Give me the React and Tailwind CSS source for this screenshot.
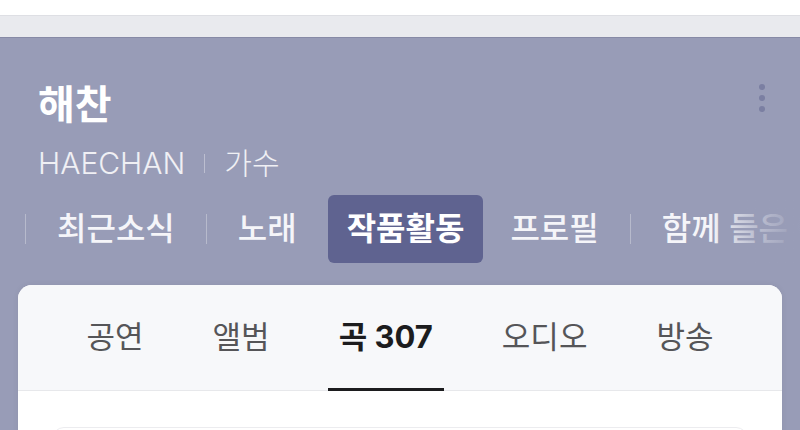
export default function App() {
  const topTabs = [
    { label: '최근소식' },
    { label: '노래' },
    { label: '작품활동', active: true },
    { label: '프로필', pull: true },
    { label: '함께 들은 아티스트' },
  ];

  const cardTabs = ['공연', '앨범', '곡 307', '오디오', '방송'];

  return (
    <div className="w-[800px] h-[430px] overflow-hidden bg-[#989cb7] font-['Inter','Noto_Sans_CJK_KR',sans-serif]">
      {/* browser-ish top strip */}
      <div className="h-[15px] bg-white" />
      <div className="h-[23px] bg-[#e9eaee] border-t border-t-[#dedfe4] border-b border-b-[#878aa6]" />

      {/* artist header */}
      <div className="pl-[38px] pr-[35px] pt-[44px]">
        <div className="flex items-center justify-between">
          <h1 className="text-[40px] leading-[46px] font-bold text-white">해찬</h1>
          <div className="flex flex-col gap-[5px] -mt-[14px]">
            <span className="w-[6px] h-[6px] rounded-full bg-[#7b7fa2]" />
            <span className="w-[6px] h-[6px] rounded-full bg-[#7b7fa2]" />
            <span className="w-[6px] h-[6px] rounded-full bg-[#7b7fa2]" />
          </div>
        </div>
        <div className="mt-[17px] flex items-center text-[30px] leading-[36px] text-white/85 font-light">
          <span>HAECHAN</span>
          <span className="mx-[19px] w-px h-[19px] bg-white/35" />
          <span>가수</span>
        </div>
      </div>

      {/* top tabs */}
      <div className="relative mt-[14px] h-[68px] overflow-hidden">
        <div className="flex items-center h-full pl-[25px] gap-[10px] whitespace-nowrap">
          <span className="w-px h-[30px] bg-white/30 shrink-0" />
          {topTabs.map((t, i) => (
            <div key={t.label} className={t.pull ? 'flex items-center gap-[10px] shrink-0 -ml-[4px]' : 'flex items-center gap-[10px] shrink-0'}>
              <div
                className={
                  t.active
                    ? 'h-[68px] px-[19px] flex items-center rounded-[6px] bg-[#5f6390] text-white text-[32px] font-semibold'
                    : 'h-[68px] px-[21px] flex items-center text-[#f5f5f9] text-[32px] font-medium'
                }
              >
                {t.label}
              </div>
              {i === 0 || i === 3 ? <span className="w-px h-[30px] bg-white/30 shrink-0" /> : null}
            </div>
          ))}
        </div>
        <div className="absolute right-0 top-0 h-full w-[90px] bg-gradient-to-r from-[#989cb7]/0 via-[#989cb7]/60 to-[#989cb7]" />
      </div>

      {/* card */}
      <div className="mt-[22px] mx-[18px] rounded-t-[14px] bg-white overflow-hidden shadow-[0_0_6px_rgba(0,0,0,0.06)]">
        <div className="h-[106px] bg-[#f7f8fa] border-b border-[#e7e8eb] flex justify-center gap-[47px]">
          {cardTabs.map((t) => {
            const active = t === '곡 307';
            return (
              <div
                key={t}
                className={
                  active
                    ? 'relative px-[11px] flex items-center text-[31px] font-bold text-[#1c1c1e]'
                    : 'relative px-[11px] flex items-center text-[31px] font-normal text-[#555558]'
                }
              >
                {t}
                {active ? <span className="absolute left-0 right-0 -bottom-px h-[3px] bg-[#1c1c1e]" /> : null}
              </div>
            );
          })}
        </div>
        <div className="h-[60px] pt-[36px] px-[34px]">
          <div className="h-[40px] rounded-t-[12px] border border-[#ececef] bg-white" />
        </div>
      </div>
    </div>
  );
}
